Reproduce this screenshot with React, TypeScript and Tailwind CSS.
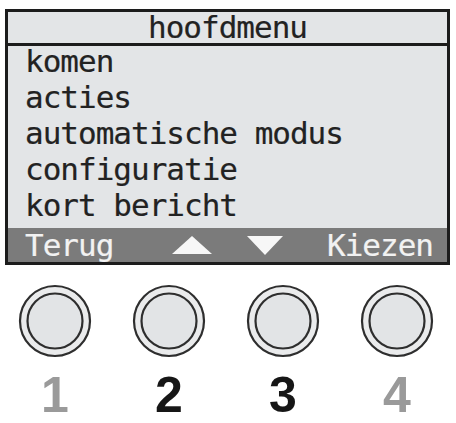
const mono = { fontFamily: '"DejaVu Sans Mono", "Liberation Mono", monospace' };

const items = ["komen", "acties", "automatische modus", "configuratie", "kort bericht"];

const buttons = [
  { n: "1", color: "text-[#9a9a9a]" },
  { n: "2", color: "text-[#161616]" },
  { n: "3", color: "text-[#161616]" },
  { n: "4", color: "text-[#9a9a9a]" },
];

function Knob() {
  return (
    <svg width="74" height="74" viewBox="0 0 74 74">
      <circle cx="37" cy="37" r="35" fill="#eaebec" stroke="#2e2e2e" strokeWidth="2.2" />
      <circle cx="37" cy="37" r="27.5" fill="#e2e4e6" stroke="#2e2e2e" strokeWidth="2.2" />
    </svg>
  );
}

export default function App() {
  return (
    <div className="w-[456px] h-[423px] bg-white overflow-hidden">
      {/* display */}
      <div
        className="ml-[5px] mt-[9px] w-[445px] h-[256px] border-[3px] border-[#1c1c1c] bg-[#e3e5e7] flex flex-col text-[31px] tracking-[-1px] [-webkit-text-stroke:0.2px]"
        style={mono}
      >
        <div className="h-[34px] border-b-[3px] border-[#1c1c1c] flex items-center justify-center text-[#222] leading-none">
          hoofdmenu
        </div>
        <div className="flex-1 flex flex-col pl-[17px] -mt-[3px] text-[#222]">
          {items.map((item) => (
            <div key={item} className="h-[36px] leading-[36px]">
              {item}
            </div>
          ))}
        </div>
        <div className="h-[34px] bg-[#7b7b7b] flex items-center pl-[17px] pr-[14px] text-[#f2f2f2] leading-none">
          <span className="w-[90px]">Terug</span>
          <svg className="ml-[57px]" width="40" height="18" viewBox="0 0 40 18">
            <polygon points="20,0 40,18 0,18" fill="#f7f7f7" />
          </svg>
          <svg className="ml-[35px]" width="36" height="19" viewBox="0 0 36 19">
            <polygon points="0,0 36,0 18,19" fill="#f7f7f7" />
          </svg>
          <span className="ml-auto">Kiezen</span>
        </div>
      </div>

      {/* buttons */}
      <div className="mt-[19px] ml-[18px] grid grid-cols-[repeat(4,74px)] gap-x-[40px]">
        {buttons.map((b) => (
          <div key={b.n} className="flex flex-col items-center">
            <Knob />
            <span
              className={`mt-[12px] text-[50px] font-bold leading-none ${b.color}`}
              style={{ fontFamily: '"Liberation Sans", Arial, sans-serif' }}
            >
              {b.n}
            </span>
          </div>
        ))}
      </div>
    </div>
  );
}
